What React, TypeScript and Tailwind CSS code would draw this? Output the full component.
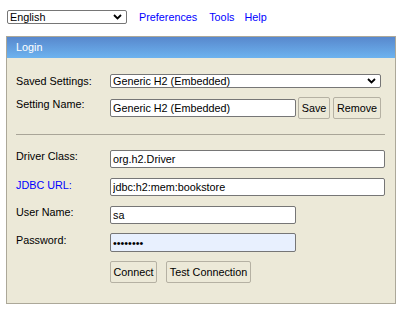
import React from "react";

const Chevron = () => (
  <svg width="9" height="6" viewBox="0 0 9 6" className="shrink-0">
    <path d="M1 1 L4.5 4.5 L8 1" fill="none" stroke="#000" strokeWidth="1.8" />
  </svg>
);

const Select = ({ text, w }: { text: string; w: string }) => (
  <div
    className={`${w} h-[14px] flex items-center justify-between border border-[#767676] rounded-[2px] bg-white pl-[2px] pr-[4px] text-black`}
  >
    <span className="leading-[12px]">{text}</span>
    <Chevron />
  </div>
);

const Input = ({ value, w, extra = "" }: { value: string; w: string; extra?: string }) => (
  <input
    readOnly
    defaultValue={value}
    className={`${w} h-[18px] border border-[#767676] rounded-[2px] bg-white px-[2px] text-black outline-none ${extra}`}
    style={{ font: "inherit" }}
  />
);

const Btn = ({ text, w }: { text: string; w: string }) => (
  <div
    className={`${w} h-[22px] flex items-center justify-center border border-[#b5b1a3] rounded-[2px] bg-[#ece9d8] text-black`}
  >
    {text}
  </div>
);

const Label = ({ children, blue = false, pt = "pt-0" }: { children: React.ReactNode; blue?: boolean; pt?: string }) => (
  <div className={`w-[103px] pl-[9px] shrink-0 leading-[13px] ${pt} ${blue ? "text-[#0000ff]" : "text-black"}`}>
    {children}
  </div>
);

export default function App() {
  return (
    <div
      className="w-[403px] h-[316px] bg-white text-[10.8px] overflow-hidden"
      style={{ fontFamily: '"Liberation Sans", Arial, sans-serif' }}
    >
      <div className="flex items-center pt-[10px] pl-[7px] h-[24px]">
        <Select text="English" w="w-[120px]" />
        <a className="ml-[12px] text-[#0000ff]">Preferences</a>
        <a className="ml-[12px] text-[#0000ff]">Tools</a>
        <a className="ml-[10px] text-[#0000ff]">Help</a>
      </div>

      <div className="ml-[6px] mt-[12px] w-[390px] h-[268px] border border-[#aca899] bg-[#ece9d8] flex flex-col">
        <div className="h-[21px] bg-gradient-to-b from-[#5888cd] to-[#6db3ef] text-white flex items-center pl-[9px]">
          Login
        </div>

        <div className="flex items-center mt-[16px] h-[14px]">
          <Label>Saved Settings:</Label>
          <Select text="Generic H2 (Embedded)" w="w-[271px]" />
        </div>

        <div className="flex items-start mt-[9px] h-[22px]">
          <Label pt="pt-[1px]">Setting Name:</Label>
          <div className="mt-[2px]">
            <Input value="Generic H2 (Embedded)" w="w-[186px]" />
          </div>
          <div className="ml-[2px]">
            <Btn text="Save" w="w-[32px]" />
          </div>
          <div className="ml-[3px]">
            <Btn text="Remove" w="w-[48px]" />
          </div>
        </div>

        <div className="mt-[15px] ml-[9px] w-[369px] h-[1px] bg-[#a9a598]" />

        <div className="flex items-start mt-[15px] h-[18px]">
          <Label pt="pt-[0px]">Driver Class:</Label>
          <Input value="org.h2.Driver" w="w-[275px]" />
        </div>

        <div className="flex items-start mt-[10px] h-[18px]">
          <Label blue pt="pt-[1px]">JDBC URL:</Label>
          <Input value="jdbc:h2:mem:bookstore" w="w-[275px]" />
        </div>

        <div className="flex items-start mt-[10px] h-[18px]">
          <Label pt="pt-[0px]">User Name:</Label>
          <Input value="sa" w="w-[186px]" />
        </div>

        <div className="flex items-start mt-[9px] h-[19px]">
          <Label pt="pt-[1px]">Password:</Label>
          <input
            readOnly
            type="password"
            defaultValue="password"
            className="w-[186px] h-[19px] border border-[#767676] rounded-[2px] bg-[#e8f0fe] px-[2px] text-black outline-none"
            style={{ font: "inherit" }}
          />
        </div>

        <div className="flex items-start mt-[9px] h-[22px]">
          <div className="w-[103px] shrink-0" />
          <Btn text="Connect" w="w-[47px]" />
          <div className="ml-[9px]">
            <Btn text="Test Connection" w="w-[85px]" />
          </div>
        </div>
      </div>
    </div>
  );
}
